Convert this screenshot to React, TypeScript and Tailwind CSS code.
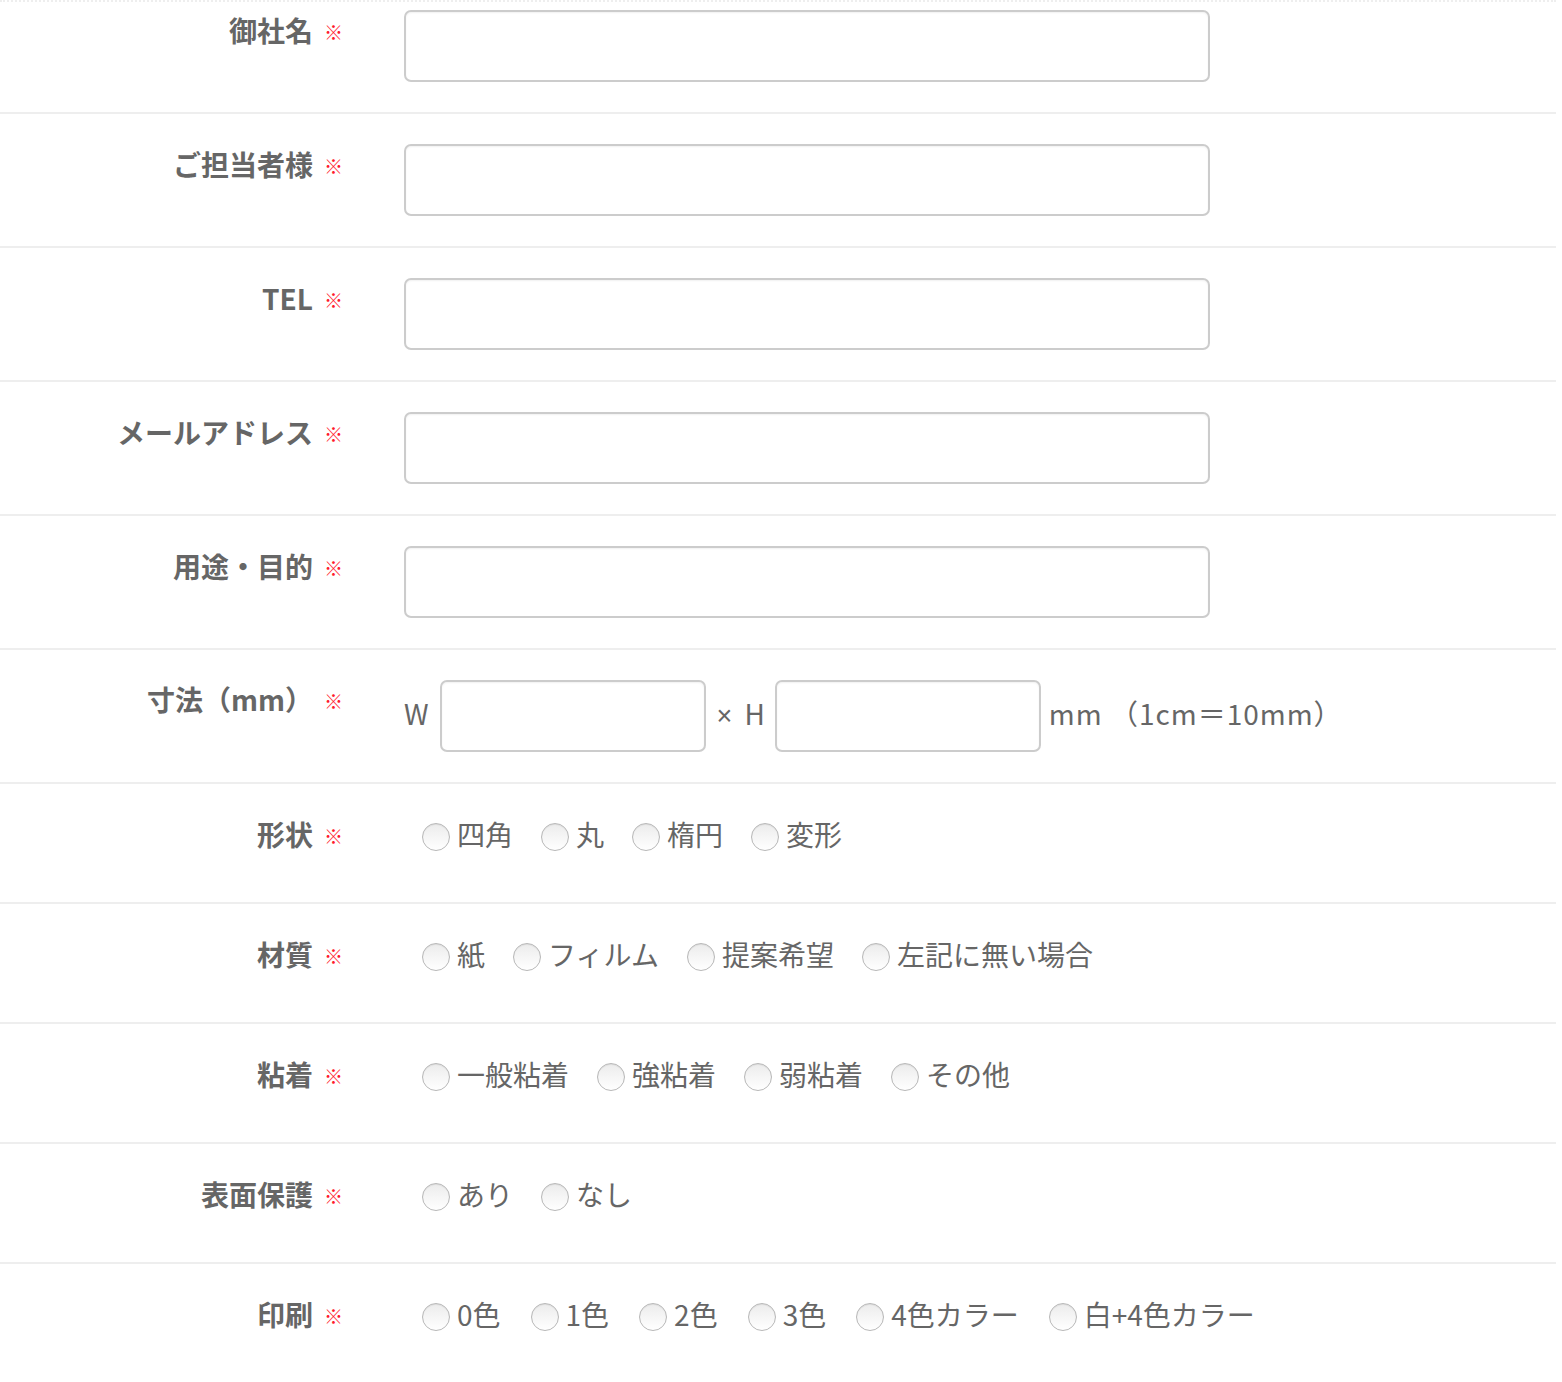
import React from "react";

const FONT = "font-['Noto_Sans_CJK_JP','Noto_Sans',sans-serif]";

function Label({ text }: { text: string }) {
  return (
    <div className="w-[343px] shrink-0 flex justify-end items-center h-[40px]">
      <span className="text-[28px] font-bold leading-[40px] text-[#666666] whitespace-nowrap">{text}</span>
      <span className="ml-[11px] text-[19px] leading-[40px] text-[#ff1a2e] translate-y-[2px]">※</span>
    </div>
  );
}

function Field({ w }: { w: string }) {
  return (
    <div
      className={`${w} h-[72px] rounded-[7px] border-2 border-[#cccccc] bg-white shadow-[inset_0_1px_2px_rgba(0,0,0,0.06)]`}
    />
  );
}

function TextRow({ label, first }: { label: string; first?: boolean }) {
  return (
    <div
      className={
        first
          ? "flex border-t-2 border-dotted border-t-[#eeeeee] pt-[8px] pb-[30px]"
          : "flex pt-[30px] pb-[30px] border-b-2 border-[#eeeeee]"
      }
      style={first ? { borderBottom: "2px solid #eeeeee" } : undefined}
    >
      <div>
        <Label text={label} />
      </div>
      <div className="ml-[61px]">
        <Field w="w-[806px]" />
      </div>
    </div>
  );
}

function Radio() {
  return (
    <span className="inline-block w-[28px] h-[28px] rounded-full border border-[#b8b8b8] bg-gradient-to-b from-[#ececec] to-white shadow-[inset_0_1px_1px_rgba(0,0,0,0.07)] shrink-0" />
  );
}

function RadioRow({ label, options, last, gap }: { label: string; options: string[]; last?: boolean; gap?: string }) {
  return (
    <div className={last ? "flex h-[118px] pt-[30px]" : "flex h-[120px] pt-[30px] border-b-2 border-[#eeeeee]"}>
      <Label text={label} />
      <div className="ml-[79px] flex items-center h-[40px]">
        {options.map((o) => (
          <label key={o} className={`flex items-center ${gap ?? "mr-[28px]"}`}>
            <span className="translate-y-[3px] flex">
              <Radio />
            </span>
            <span className="ml-[7px] text-[28px] leading-[40px] text-[#666666] whitespace-nowrap">{o}</span>
          </label>
        ))}
      </div>
    </div>
  );
}

function SizeRow() {
  return (
    <div className="flex pt-[30px] pb-[30px] border-b-2 border-[#eeeeee]">
      <div className="-mt-[1px]">
        <Label text="寸法（mm）" />
      </div>
      <div className="ml-[61px] flex items-center text-[28px] text-[#666666] leading-[40px]">
        <span className="-translate-y-[3px]">W</span>
        <div className="ml-[11px]">
          <Field w="w-[266px]" />
        </div>
        <span className="ml-[11px] flex items-center">
          <span className="text-[27px] leading-[40px] font-['Liberation_Sans',sans-serif]">×</span>
          <span className="ml-[12px] -translate-y-[3px]">H</span>
        </span>
        <div className="ml-[10px]">
          <Field w="w-[266px]" />
        </div>
        <span className="ml-[8px] whitespace-nowrap -translate-y-[3px] tracking-[1px]">mm （1cm＝10mm）</span>
      </div>
    </div>
  );
}

export default function App() {
  return (
    <div className={`${FONT} bg-white w-[1562px] min-h-[1382px]`}>
      <div className="w-[1556px]">
        <TextRow label="御社名" first />
        <TextRow label="ご担当者様" />
        <TextRow label="TEL" />
        <TextRow label="メールアドレス" />
        <TextRow label="用途・目的" />
        <SizeRow />
        <RadioRow label="形状" options={["四角", "丸", "楕円", "変形"]} />
        <RadioRow label="材質" options={["紙", "フィルム", "提案希望", "左記に無い場合"]} />
        <RadioRow label="粘着" options={["一般粘着", "強粘着", "弱粘着", "その他"]} />
        <RadioRow label="表面保護" options={["あり", "なし"]} />
        <RadioRow
          label="印刷"
          options={["0色", "1色", "2色", "3色", "4色カラー", "白+4色カラー"]}
          last
          gap="mr-[30px]"
        />
      </div>
    </div>
  );
}
